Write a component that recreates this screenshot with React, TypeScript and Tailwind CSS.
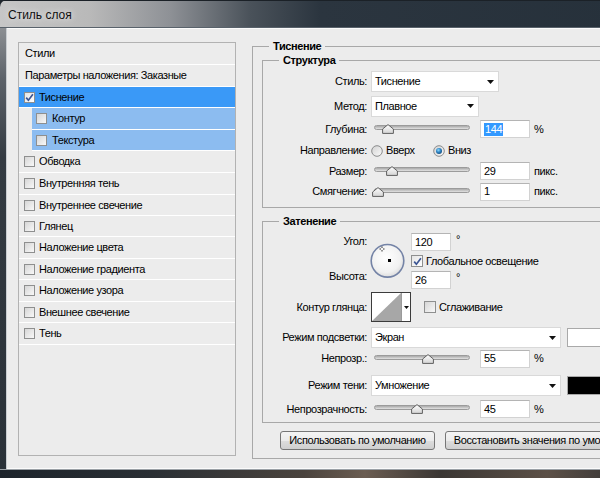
import React from "react";

const rows: { label: string; kind: "header" | "plain" | "selected" | "sub" | "item"; checked?: boolean; h: string }[] = [
  { label: "Стили", kind: "header", h: "h-[22px]" },
  { label: "Параметры наложения: Заказные", kind: "plain", h: "h-[22px]" },
  { label: "Тиснение", kind: "selected", checked: true, h: "h-[21px]" },
  { label: "Контур", kind: "sub", h: "h-[22px]" },
  { label: "Текстура", kind: "sub", h: "h-[21px]" },
  { label: "Обводка", kind: "item", h: "h-[22px]" },
  { label: "Внутренняя тень", kind: "item", h: "h-[22px]" },
  { label: "Внутреннее свечение", kind: "item", h: "h-[21px]" },
  { label: "Глянец", kind: "item", h: "h-[21px]" },
  { label: "Наложение цвета", kind: "item", h: "h-[22px]" },
  { label: "Наложение градиента", kind: "item", h: "h-[21px]" },
  { label: "Наложение узора", kind: "item", h: "h-[22px]" },
  { label: "Внешнее свечение", kind: "item", h: "h-[21px]" },
  { label: "Тень", kind: "item", h: "h-[22px]" },
];

function Checkbox({ checked = false, big = false }: { checked?: boolean; big?: boolean }) {
  return (
    <span
      className={`inline-flex shrink-0 items-center justify-center border border-[#8e8f8f] ${
        big ? "w-[12px] h-[12px]" : "w-[11px] h-[11px]"
      } ${checked ? "bg-[linear-gradient(135deg,#e4e4e4,#ffffff)]" : "bg-[linear-gradient(135deg,#d6d6d6,#f8f8f8)]"}`}
    >
      {checked && (
        <svg width="9" height="9" viewBox="0 0 9 9">
          <path d="M1.2 4.6 L3.4 7.2 L7.9 1.3" stroke="#3b5593" strokeWidth="1.7" fill="none" />
        </svg>
      )}
    </span>
  );
}

function Radio({ checked = false }: { checked?: boolean }) {
  return (
    <svg width="12" height="12" viewBox="0 0 12 12" className="shrink-0">
      <defs>
        <linearGradient id={checked ? "rg1" : "rg0"} x1="0" y1="0" x2="1" y2="1">
          <stop offset="0" stopColor="#d2d2d2" />
          <stop offset="1" stopColor="#fafafa" />
        </linearGradient>
        <radialGradient id="rdot" cx="0.4" cy="0.35" r="0.7">
          <stop offset="0" stopColor="#8fdcff" />
          <stop offset="0.5" stopColor="#2f86c6" />
          <stop offset="1" stopColor="#124a7c" />
        </radialGradient>
      </defs>
      <circle cx="6" cy="6" r="5.3" fill={`url(#${checked ? "rg1" : "rg0"})`} stroke="#8a8b8c" strokeWidth="1" />
      {checked && <circle cx="6" cy="6" r="3" fill="url(#rdot)" />}
    </svg>
  );
}

function Label({ children }: { children: React.ReactNode }) {
  return <div className="w-[104px] shrink-0 text-right whitespace-nowrap">{children}</div>;
}

function Select({ value, w }: { value: string; w: string }) {
  return (
    <div className={`${w} h-[21px] shrink-0 ml-[4px] flex items-center bg-white border border-[#d9d9d9] pl-[3px] pr-[4px]`}>
      <span className="flex-1">{value}</span>
      <svg width="7" height="4" viewBox="0 0 7 4">
        <path d="M0 0H7L3.5 4Z" fill="#111" />
      </svg>
    </div>
  );
}

function Slider({ pos }: { pos: number }) {
  return (
    <div className="relative w-[109px] h-[14px] shrink-0 ml-[4px]">
      <div className="absolute left-[3px] top-[3px] w-[96px] h-[5px] rounded-full border border-[#9b9b9b] bg-[linear-gradient(180deg,#a9a9a9,#e2e2e2)]" />
      <svg className="absolute top-[2px]" style={{ left: pos - 372 - 6 }} width="12" height="10" viewBox="0 0 12 10">
        <defs>
          <linearGradient id="th" x1="0" y1="0" x2="0" y2="1">
            <stop offset="0" stopColor="#ffffff" />
            <stop offset="1" stopColor="#d4d4d4" />
          </linearGradient>
        </defs>
        <path d="M6 0.6 L11.4 5 L11.4 9.4 L0.6 9.4 L0.6 5 Z" fill="url(#th)" stroke="#5f5f5f" strokeWidth="1" />
      </svg>
    </div>
  );
}

function Field({ children, w = "w-[50px]", h = "h-[18px]" }: { children: React.ReactNode; w?: string; h?: string }) {
  return (
    <div className={`${w} ${h} shrink-0 flex items-center bg-white border border-[#d2d2d2] border-t-[#b4b4b4] pl-[3px]`}>
      {children}
    </div>
  );
}

function Button({ children, w }: { children: React.ReactNode; w: string }) {
  return (
    <div
      className={`${w} h-[19px] shrink-0 flex items-center justify-center rounded-[3px] border border-[#767676] bg-[linear-gradient(180deg,#f4f4f4_0%,#ebebeb_50%,#dddddd_51%,#cfcfcf_100%)] whitespace-nowrap`}
    >
      {children}
    </div>
  );
}

export default function App() {
  return (
    <div className="w-[600px] h-[478px] overflow-hidden bg-[#1f262d] font-['Liberation_Sans',Arial,sans-serif] text-[11px] tracking-[-0.4px] text-black leading-none">
      <div className="w-[760px] h-[478px] flex flex-col rounded-tl-[7px] overflow-hidden">
        {/* Title bar */}
        <div className="h-[28px] shrink-0 flex items-center pl-[8px] pt-[2px] border-t border-[#1b2127] border-b border-b-[#59626b] bg-[linear-gradient(90deg,#c6c6c6_0px,#b9b9b9_90px,#8e9196_170px,#4a525a_250px,#2b353f_320px,#242f39_100%)] text-[12px] tracking-[0px] text-[#101010] [text-shadow:0_0_6px_rgba(255,255,255,0.9)]">
          Стиль слоя
        </div>

        <div className="flex flex-1 min-h-0">
          {/* left frame */}
          <div className="w-[7px] shrink-0 border-r border-[#c9cdd1] bg-[linear-gradient(180deg,#8c8f93_0px,#5d636a_50px,#343b42_130px,#2a3138_100%)]" />

          {/* client */}
          <div className="flex-1 flex items-start bg-[#ececec] border-t border-b border-[#fbfbfb] pl-[11px] pt-[10px]">
            {/* Styles list */}
            <div className="w-[218px] h-[414px] mt-[3px] shrink-0 border border-[#b2b2b2] bg-[#ececec] flex flex-col">
              {rows.map((r) => {
                if (r.kind === "header" || r.kind === "plain") {
                  return (
                    <div key={r.label} className={`${r.h} shrink-0 flex items-center pl-[6px] border-b border-white`}>
                      {r.label}
                    </div>
                  );
                }
                if (r.kind === "sub") {
                  return (
                    <div key={r.label} className={`${r.h} shrink-0 flex pl-[13px]`}>
                      <div className="flex-1 flex items-center bg-[#8cbcf0] border-b border-white pl-[4px]">
                        <Checkbox />
                        <span className="ml-[5px]">{r.label}</span>
                      </div>
                    </div>
                  );
                }
                return (
                  <div
                    key={r.label}
                    className={`${r.h} shrink-0 flex items-center pl-[5px] border-b border-white ${
                      r.kind === "selected" ? "bg-[#3a99f7]" : ""
                    }`}
                  >
                    <Checkbox checked={r.checked} />
                    <span className="ml-[4px]">{r.label}</span>
                  </div>
                );
              })}
            </div>

            {/* Right: Тиснение */}
            <fieldset className="ml-[16px] w-[420px] shrink-0 border border-[#a8a8a8] pb-[8px]">
              <legend className="ml-[16px] px-[4px] font-bold leading-[14px]">Тиснение</legend>

              {/* Структура */}
              <fieldset className="ml-[9px] w-[400px] border border-[#a8a8a8] pt-[2px] pb-[5px]">
                <legend className="ml-[16px] px-[4px] font-bold leading-[14px]">Структура</legend>

                <div className="h-[25px] flex items-center">
                  <Label>Стиль:</Label>
                  <Select value="Тиснение" w="w-[128px]" />
                </div>
                <div className="h-[24px] flex items-center">
                  <Label>Метод:</Label>
                  <Select value="Плавное" w="w-[108px]" />
                </div>
                <div className="h-[22px] flex items-center">
                  <Label>Глубина:</Label>
                  <Slider pos={389} />
                  <Field>
                    <span className="bg-[#3399ff] text-white px-[1px] leading-[13px]">144</span>
                  </Field>
                  <span className="ml-[4px]">%</span>
                </div>
                <div className="h-[21px] flex items-center">
                  <Label>Направление:</Label>
                  <span className="ml-[4px] flex items-center">
                    <Radio />
                  </span>
                  <span className="ml-[3px] w-[47px]">Вверх</span>
                  <Radio checked />
                  <span className="ml-[3px]">Вниз</span>
                </div>
                <div className="h-[20px] flex items-center">
                  <Label>Размер:</Label>
                  <Slider pos={393} />
                  <Field>29</Field>
                  <span className="ml-[4px]">пикс.</span>
                </div>
                <div className="h-[21px] flex items-center">
                  <Label>Смягчение:</Label>
                  <Slider pos={379} />
                  <Field>1</Field>
                  <span className="ml-[4px]">пикс.</span>
                </div>
              </fieldset>

              {/* Затенение */}
              <fieldset className="ml-[9px] mt-[6px] w-[400px] border border-[#a8a8a8] pb-[3px]">
                <legend className="ml-[16px] px-[4px] font-bold leading-[14px]">Затенение</legend>

                <div className="mt-[5px] h-[56px] flex items-center">
                  <div className="w-[104px] shrink-0 self-start flex flex-col items-end">
                    <div className="h-[17px] flex items-center">Угол:</div>
                    <div className="h-[18px]" />
                    <div className="h-[17px] flex items-center">Высота:</div>
                  </div>
                  <svg className="ml-[3px] shrink-0" width="36" height="36" viewBox="0 0 36 36">
                    <defs>
                      <radialGradient id="dial" cx="0.45" cy="0.4" r="0.65">
                        <stop offset="0" stopColor="#ffffff" />
                        <stop offset="0.7" stopColor="#f1f1f1" />
                        <stop offset="1" stopColor="#d6d6d6" />
                      </radialGradient>
                    </defs>
                    <circle cx="17.5" cy="17.8" r="16.3" fill="url(#dial)" stroke="#7483a6" strokeWidth="1.6" />
                    <path d="M12 3.5V5 M12 7V8.5 M9.5 6H11 M13 6H14.5" stroke="#333" strokeWidth="1" />
                    <rect x="18" y="16" width="3" height="3" fill="#000" />
                  </svg>
                  <div className="ml-[5px] self-start flex flex-col">
                    <div className="flex">
                      <Field w="w-[40px]" h="h-[18px]">120</Field>
                      <span className="ml-[5px] mt-[1px]">°</span>
                    </div>
                    <div className="h-[20px] flex items-center">
                      <Checkbox checked big />
                      <span className="ml-[3px]">Глобальное освещение</span>
                    </div>
                    <div className="flex">
                      <Field w="w-[40px]" h="h-[18px]">26</Field>
                      <span className="ml-[5px] mt-[1px]">°</span>
                    </div>
                  </div>
                </div>

                <div className="mt-[3px] h-[30px] flex items-center">
                  <Label>Контур глянца:</Label>
                  <div className="ml-[4px] w-[40px] h-[30px] shrink-0 flex border border-[#3c3c3c] bg-white">
                    <svg width="29" height="28" viewBox="0 0 29 28" className="shrink-0">
                      <rect width="29" height="28" fill="#fff" />
                      <path d="M0 28 L29 0 L29 28 Z" fill="#a7a7a7" />
                    </svg>
                    <div className="flex-1 flex items-center justify-center border-l border-[#9a9a9a]">
                      <svg width="5" height="3" viewBox="0 0 5 3">
                        <path d="M0 0H5L2.5 3Z" fill="#111" />
                      </svg>
                    </div>
                  </div>
                  <span className="ml-[13px] flex items-center">
                    <Checkbox big />
                  </span>
                  <span className="ml-[3px]">Сглаживание</span>
                </div>

                <div className="mt-[4px] h-[23px] flex items-center">
                  <Label>Режим подсветки:</Label>
                  <Select value="Экран" w="w-[190px]" />
                  <div className="ml-[6px] w-[60px] h-[19px] shrink-0 bg-white border border-[#a9a9a9]" />
                </div>
                <div className="h-[19px] flex items-center">
                  <Label>Непрозр.:</Label>
                  <Slider pos={429} />
                  <Field>55</Field>
                  <span className="ml-[4px]">%</span>
                </div>
                <div className="mt-[6px] h-[23px] flex items-center">
                  <Label>Режим тени:</Label>
                  <Select value="Умножение" w="w-[190px]" />
                  <div className="ml-[6px] w-[60px] h-[19px] shrink-0 bg-black border border-[#a9a9a9]" />
                </div>
                <div className="mt-[2px] h-[20px] flex items-center">
                  <Label>Непрозрачность:</Label>
                  <Slider pos={418} />
                  <Field>45</Field>
                  <span className="ml-[4px]">%</span>
                </div>
              </fieldset>

              <div className="mt-[8px] ml-[27px] flex">
                <Button w="w-[155px]">Использовать по умолчанию</Button>
                <div className="ml-[10px]">
                  <Button w="w-[200px]">Восстановить значения по умолчанию</Button>
                </div>
              </div>
            </fieldset>
          </div>
        </div>

        {/* bottom frame */}
        <div className="h-[9px] shrink-0 border-t border-[#9ba1a6] bg-[linear-gradient(90deg,#1d242b_0%,#2a2f34_20%,#4a433d_40%,#6b5d52_48%,#3a3633_58%,#5c5047_72%,#2c2d2f_85%,#4a4540_100%)]" />
      </div>
    </div>
  );
}
